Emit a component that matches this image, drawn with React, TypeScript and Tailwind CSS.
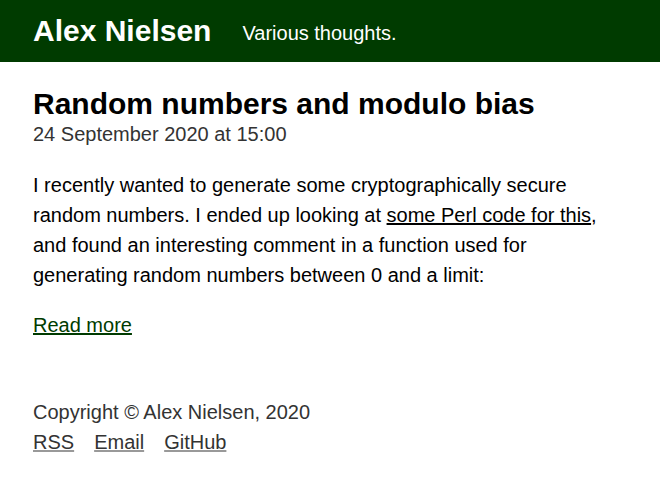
export default function App() {
  return (
    <div className="min-h-screen bg-white font-['Liberation_Sans',Arial,sans-serif] text-black">
      {/* Header */}
      <header className="bg-[#003b00] h-[62px] px-[33px] flex items-center gap-[31px]">
        <h1 className="text-[30px] font-bold text-white leading-none">Alex Nielsen</h1>
        <span className="text-[20px] text-white leading-none mt-[3px]">Various thoughts.</span>
      </header>

      <main className="px-[33px] pt-[24px]">
        <h2 className="text-[30px] font-bold leading-[36px]">Random numbers and modulo bias</h2>
        <p className="text-[20px] text-[#333] leading-[24px]">24 September 2020 at 15:00</p>

        <p className="text-[20px] leading-[30px] mt-[24px] max-w-[576px]">
          I recently wanted to generate some cryptographically secure random numbers. I ended up looking at{" "}
          <a href="#" className="underline">some Perl code for this</a>, and found an interesting comment in a
          function used for generating random numbers between 0 and a limit:
        </p>

        <a href="#" className="inline-block mt-[20px] text-[20px] leading-[30px] text-[#003b00] underline">
          Read more
        </a>
      </main>

      <footer className="px-[33px] pt-[57px] text-[20px] text-[#333] leading-[30px]">
        <p>Copyright © Alex Nielsen, 2020</p>
        <div className="flex gap-[20px]">
          <a href="#" className="underline decoration-[#999] decoration-2">RSS</a>
          <a href="#" className="underline decoration-[#999] decoration-2">Email</a>
          <a href="#" className="underline decoration-[#999] decoration-2">GitHub</a>
        </div>
      </footer>
    </div>
  );
}
